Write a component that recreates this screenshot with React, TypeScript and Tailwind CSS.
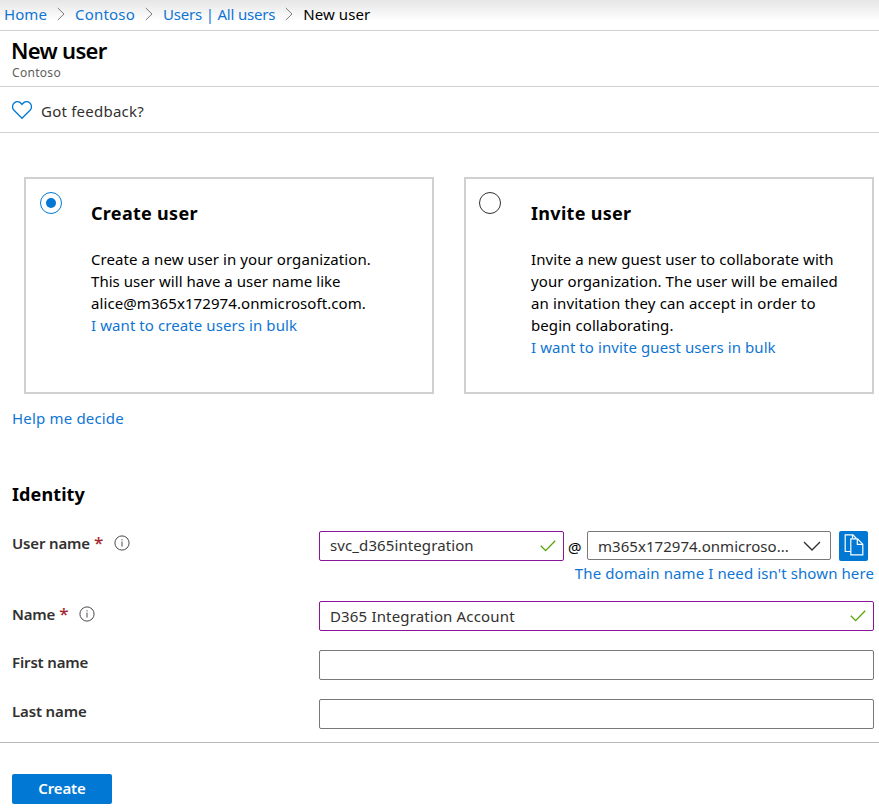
import type { ReactNode } from 'react';

const Crumb = ({ children }: { children: ReactNode }) => (
  <a className="text-[#0f75d3]">{children}</a>
);

const Separator = ({ className }: { className: string }) => (
  <svg className={className} width="8" height="14" viewBox="0 0 8 14" fill="none" stroke="#7a7a7a" strokeWidth="1">
    <path d="M0.8 1L7 7L0.8 13" />
  </svg>
);

const Check = () => (
  <svg width="16" height="12" viewBox="0 0 16 12" fill="none" stroke="#57a300" strokeWidth="1.3">
    <path d="M0.8 5.8L5.6 10.6L15.2 0.8" />
  </svg>
);

const Info = ({ className }: { className: string }) => (
  <svg className={className} width="16" height="16" viewBox="0 0 16 16" fill="none" stroke="#4a4a4a" strokeWidth="1">
    <circle cx="8" cy="8" r="7.1" />
    <path d="M8 6.6V11.6M8 4.2V5.4" />
  </svg>
);

const Radio = ({ checked }: { checked: boolean }) => (
  <span className={`flex size-[22px] shrink-0 items-center justify-center rounded-full border ${checked ? 'border-[#0078d4]' : 'border-[#323130]'}`}>
    {checked && <span className="size-[10px] rounded-full bg-[#0078d4]" />}
  </span>
);

function OptionCard({ title, checked, children, link }: { title: string; checked: boolean; children: ReactNode; link: string }) {
  return (
    <section className={`flex h-[217px] w-[410px] items-start border-2 border-[#d0d0d0] pt-[13px] ${checked ? 'gap-[29px] pl-[14px]' : 'gap-[30px] pl-[13px]'}`}>
      <Radio checked={checked} />
      <div className="whitespace-nowrap pt-[9px]">
        <h2 className="text-[18px] leading-6 font-bold tracking-[0.3px]">{title}</h2>
        <p className="mt-[23px]">{children}</p>
        <a className="text-[#0f75d3]">{link}</a>
      </div>
    </section>
  );
}

const Label = ({ children, required }: { children: ReactNode; required?: boolean }) => (
  <div className="flex w-[307px] shrink-0 pt-px font-semibold tracking-[-0.15px] text-[#323130]">
    <span>{children}</span>
    {required && (
      <>
        <span className="ml-[4px] w-[8px] text-[17px] font-medium text-[#a4262c]">*</span>
        <Info className="mt-[3px] ml-[12px]" />
      </>
    )}
  </div>
);

export default function App() {
  return (
    <div className="h-[811px] w-[879px] overflow-hidden bg-white font-['Noto_Sans','Open_Sans',sans-serif] text-[15px] leading-[22px] tracking-[0.085px] whitespace-nowrap text-black">
      <nav className="flex h-[31px] items-start border-b border-[#d0d0d0] bg-linear-to-b from-[#e6e6e6] to-white to-70% pt-[3px] pl-[4px]">
        <Crumb>Home</Crumb>
        <Separator className="mt-[4px] mr-[10px] ml-[10px]" />
        <span className="tracking-[0.2px]"><Crumb>Contoso</Crumb></span>
        <Separator className="mt-[4px] mr-[10px] ml-[10px]" />
        <span className="tracking-[-0.2px]"><Crumb>Users | All users</Crumb></span>
        <Separator className="mt-[4px] mr-[10px] ml-[10px]" />
        <span>New user</span>
      </nav>

      <header className="h-[56px] border-b border-[#d0d0d0] pt-[5px] pl-[11px]">
        <h1 className="text-[22px] leading-[28px] font-semibold tracking-[-0.7px]">New user</h1>
        <p className="pl-px text-[12px] leading-[17px] tracking-[0.3px] text-[#605e5c]">Contoso</p>
      </header>

      <div className="flex h-[46px] border-b border-[#d0d0d0] pl-[12px] text-[#323130]">
        <svg className="mt-[14px]" width="20" height="19" viewBox="0 0 20 19" fill="none" stroke="#0078d4" strokeWidth="1.3">
          <path d="M10 17.3L2 9.3C-0.2 7 0.2 3.6 2.2 1.9C4.4 0.1 7.4 0.4 9.2 2.5L10 3.5L10.8 2.5C12.6 0.4 15.6 0.1 17.8 1.9C19.8 3.6 20.2 7 18 9.3Z" />
        </svg>
        <span className="mt-[13px] ml-[9px] tracking-[0.23px]">Got feedback?</span>
      </div>

      <main>
        <div className="flex gap-[30px] pt-[44px] pl-[24px]">
          <OptionCard title="Create user" checked link="I want to create users in bulk">
            Create a new user in your organization.<br />
            <span className="tracking-[0.04px]">This user will have a user name like</span><br />
            alice@m365x172974.onmicrosoft.com.
          </OptionCard>
          <OptionCard title="Invite user" checked={false} link="I want to invite guest users in bulk">
            Invite a new guest user to collaborate with<br />
            your organization. The user will be emailed<br />
            <span className="tracking-[0.14px]">an invitation they can accept in order to</span><br />
            begin collaborating.
          </OptionCard>
        </div>
        <a className="mt-[13px] ml-[12px] block tracking-[0.18px] text-[#0f75d3]">Help me decide</a>

        <h2 className="mt-[53px] ml-[12px] text-[18px] leading-6 font-bold tracking-[0.1px]">Identity</h2>

        <form className="pt-[25px] pl-[12px]">
          <div className="flex h-[70px]">
            <Label required>User name</Label>
            <div className="w-[555px]">
              <div className="flex">
                <div className="flex h-[30px] w-[245px] items-center justify-between rounded-[2px] border border-[#881798] pr-[7px] pl-[10px] text-[#323130]">
                  <span className="pb-[2px] tracking-[0.1px]">svc_d365integration</span>
                  <Check />
                </div>
                <span className="w-[23px] pt-[5px] pl-[4px] text-[15px]">@</span>
                <div className="flex h-[29px] w-[244px] items-center justify-between rounded-[2px] border border-[#7a7876] pr-[9px] pl-[10px] text-[#323130]">
                  <span className="tracking-[0.04px]">m365x172974.onmicroso...</span>
                  <svg width="18" height="10" viewBox="0 0 18 10" fill="none" stroke="#323130" strokeWidth="1.4">
                    <path d="M1 1L9 9L17 1" />
                  </svg>
                </div>
                <div className="ml-[8px] flex h-[30px] w-[29px] items-start justify-center rounded-[2px] bg-[#0078d4] pt-[3px]">
                  <svg width="20" height="22" viewBox="0 0 20 22" fill="none" stroke="#fff" strokeWidth="1.2">
                    <path d="M6.5 17.5H1.2V0.9H9L12.3 4.5M8.5 0.9V4" />
                    <path d="M6.8 4.9H13.5L18.8 10.2V20.9H6.8ZM13.3 4.9V10.4H18.8" />
                  </svg>
                </div>
              </div>
              <a className="mt-[1px] block text-right tracking-[0.1px] text-[#0f75d3]">The domain name I need isn't shown here</a>
            </div>
          </div>
          <div className="flex h-[49px]">
            <div className="pt-px"><Label required>Name</Label></div>
            <div className="flex h-[30px] w-[555px] items-center justify-between rounded-[2px] border border-[#881798] pr-[7px] pl-[10px] text-[#323130]">
              <span className="tracking-[0.16px]">D365 Integration Account</span>
              <Check />
            </div>
          </div>
          <div className="flex h-[49px]">
            <Label>First name</Label>
            <div className="h-[30px] w-[555px] rounded-[2px] border border-[#7a7876]" />
          </div>
          <div className="flex h-[43px]">
            <Label>Last name</Label>
            <div className="h-[30px] w-[555px] rounded-[2px] border border-[#7a7876]" />
          </div>
        </form>
      </main>

      <footer className="border-t border-[#b8b8b8] pt-[31px] pl-[12px]">
        <button className="block h-[30px] w-[100px] rounded-[2px] bg-[#0078d4] pb-[2px] font-semibold tracking-[-0.15px] text-white">Create</button>
      </footer>
    </div>
  );
}
